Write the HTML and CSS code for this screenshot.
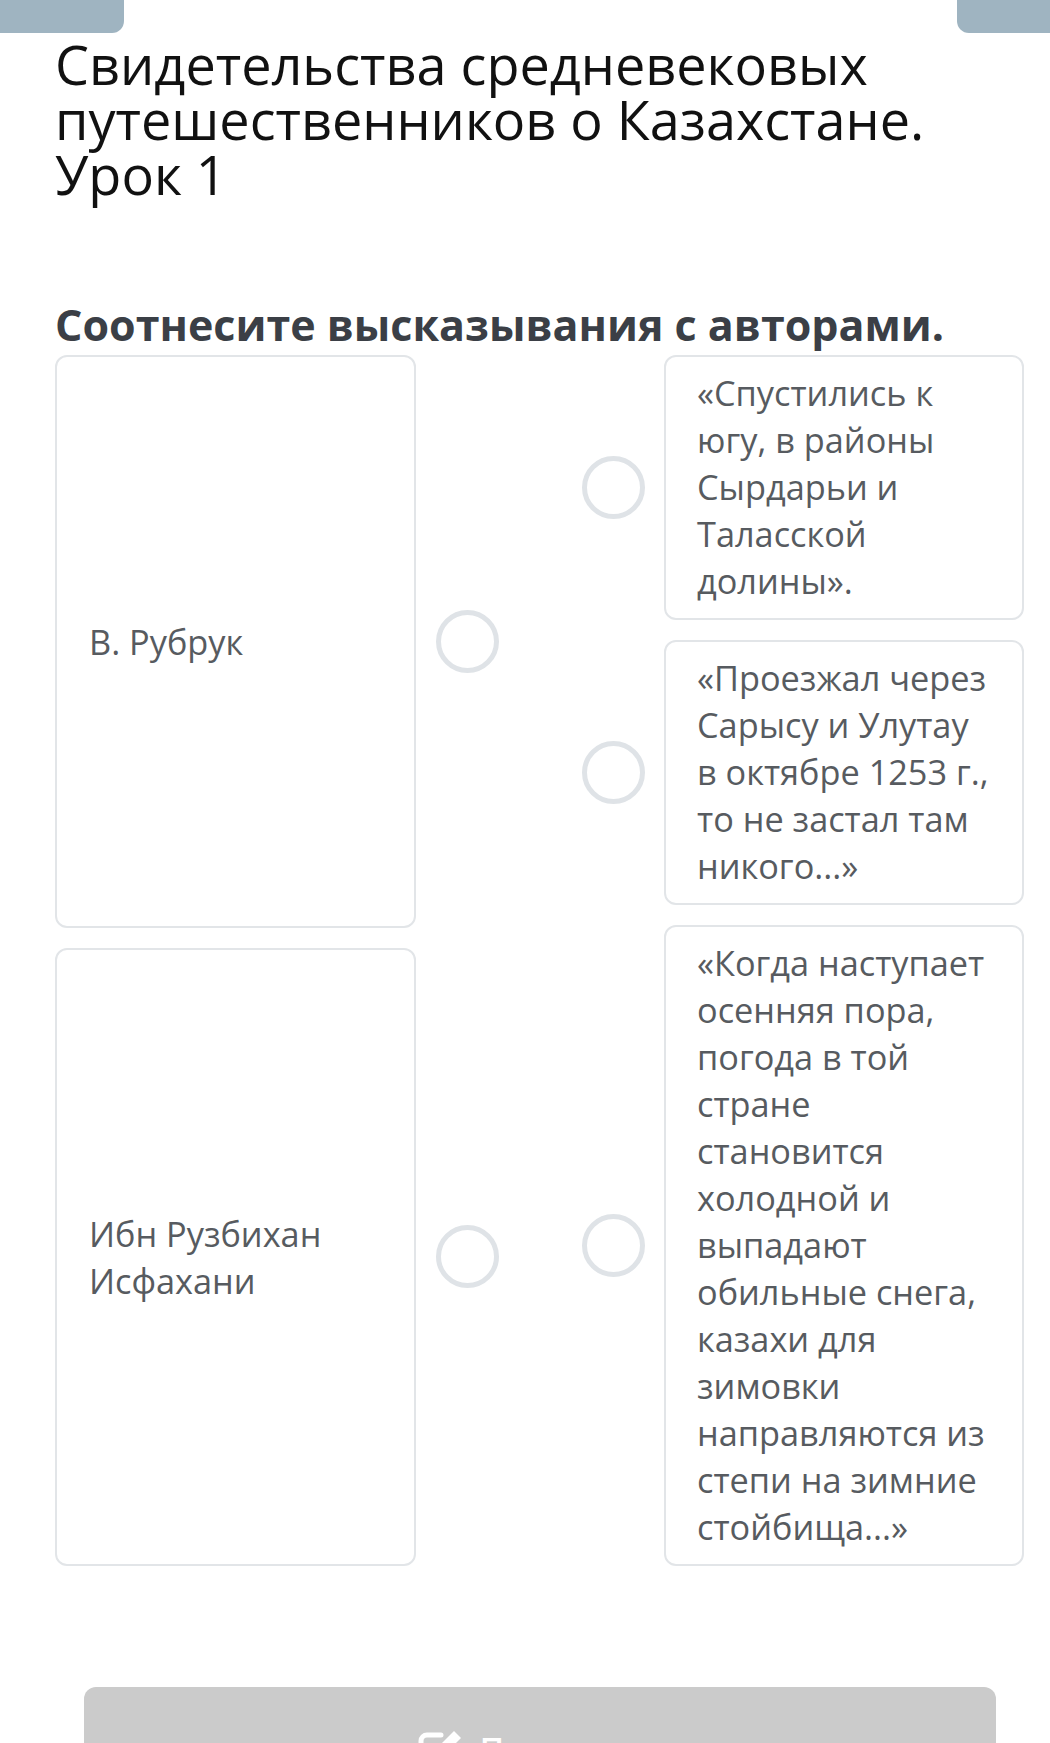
FILE: index.html
```html
<!DOCTYPE html>
<html lang="ru">
<head>
<meta charset="utf-8">
<title>Свидетельства средневековых путешественников о Казахстане. Урок 1</title>
<link rel="stylesheet" href="styles.css">
</head>
<body>
<div class="tabs">
  <div class="tab tab-left"></div>
  <div class="tab tab-right"></div>
</div>
<main class="content">
  <h1 class="title">Свидетельства средневековых путешественников о Казахстане. Урок&nbsp;1</h1>
  <h2 class="task">Соотнесите высказывания с авторами.</h2>
  <div class="match">
    <div class="group group-left">
      <div class="row row-a">
        <div class="card card-author"><span>В. Рубрук</span></div>
        <div class="dot-cell"><span class="dot"></span></div>
      </div>
      <div class="row row-b">
        <div class="card card-author"><span>Ибн Рузбихан Исфахани</span></div>
        <div class="dot-cell"><span class="dot"></span></div>
      </div>
    </div>
    <div class="group group-right">
      <div class="row">
        <div class="dot-cell"><span class="dot"></span></div>
        <div class="card card-quote">«Спустились к югу, в районы Сырдарьи и Таласской долины».</div>
      </div>
      <div class="row">
        <div class="dot-cell"><span class="dot"></span></div>
        <div class="card card-quote">«Проезжал через Сарысу и Улутау в октябре 1253 г., то не застал там никого...»</div>
      </div>
      <div class="row">
        <div class="dot-cell"><span class="dot"></span></div>
        <div class="card card-quote">«Когда наступает осенняя пора, погода в той стране становится холодной и выпадают обильные снега, казахи для зимовки направляются из степи на зимние стойбища...»</div>
      </div>
    </div>
  </div>
  <button class="check" type="button">
    <svg class="check-icon" width="46" height="46" viewBox="0 0 46 46" aria-hidden="true">
      <path d="M24 6 H10 a6 6 0 0 0 -6 6 V36 a6 6 0 0 0 6 6 H34 a6 6 0 0 0 6 -6 V22" fill="none" stroke="#fff" stroke-width="5" stroke-linecap="round"/>
      <path d="M37 2 L44 9 L24 29 L15 31 L17 22 Z" fill="#fff"/>
    </svg>
    <span>Проверить</span>
  </button>
</main>
</body>
</html>
```
FILE: styles.css
```css
html, body {
  margin: 0;
  padding: 0;
  background: #ffffff;
}
body {
  font-family: "Open Sans", "Noto Sans", sans-serif;
  overflow: hidden;
  height: 1743px;
}
.tabs {
  display: flex;
  justify-content: space-between;
}
.tab {
  height: 33px;
  background: #9fb4c1;
}
.tab-left {
  width: 124px;
  border-bottom-right-radius: 12px;
}
.tab-right {
  width: 93px;
  border-bottom-left-radius: 12px;
}
.content {
  padding: 0 26px 0 55px;
}
.title {
  margin: 4px 0 0;
  font-size: 54px;
  line-height: 55px;
  font-weight: 400;
  color: #111111;
}
.task {
  margin: 98px 0 0;
  font-size: 43px;
  line-height: 50px;
  font-weight: 700;
  color: #3b3f46;
}
.match {
  margin-top: 5px;
  display: flex;
  justify-content: space-between;
}
.group {
  display: flex;
  flex-direction: column;
  gap: 20px;
}
.group-left {
  width: 463px;
}
.group-right {
  width: 462px;
}
.row {
  display: flex;
}
.row-a { flex: 571 1 0; }
.row-b { flex: 616 1 0; }
.dot-cell {
  width: 102px;
  display: flex;
  align-items: center;
  justify-content: center;
}
.dot {
  width: 63px;
  height: 63px;
  box-sizing: border-box;
  border: 5px solid #dfe3e7;
  border-radius: 50%;
}
.card {
  box-sizing: border-box;
  border: 2px solid #e2e5e8;
  border-radius: 12px;
  background: #fff;
  color: #575b60;
  font-size: 34.3px;
  line-height: 47px;
}
.card-author {
  width: 361px;
  display: flex;
  align-items: center;
  padding: 0 20px 0 32px;
}
.card-quote {
  width: 360px;
  padding: 12px 25px 14px 31px;
}
.check {
  display: flex;
  justify-content: center;
  align-items: flex-start;
  gap: 17px;
  box-sizing: border-box;
  width: 912px;
  height: 80px;
  margin: 121px 0 0 29px;
  padding: 42px 0 0;
  border: none;
  border-radius: 12px 12px 0 0;
  background: #cbcbcb;
  color: #fff;
  font-family: "Open Sans", "Noto Sans", sans-serif;
  font-size: 33px;
  font-weight: 600;
  line-height: 40px;
  overflow: hidden;
}
.check-icon {
  flex: none;
}
```
